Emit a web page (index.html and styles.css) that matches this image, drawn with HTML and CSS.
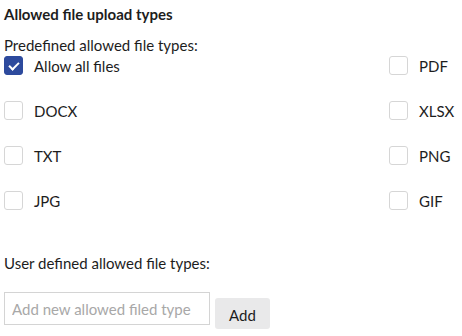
FILE: index.html
```html
<!DOCTYPE html>
<html lang="en">
<head>
    <meta charset="UTF-8">
    <title>Allowed file upload types</title>
    <link rel="stylesheet" href="styles.css">
</head>
<body>

    <div class="upload-settings">

        <!-- Predefined types -->
        <h3 class="section-title">Allowed file upload types</h3>
        <p class="field-label">Predefined allowed file types:</p>

        <div class="type-grid">
            <label class="type-option">
                <input type="checkbox" checked>
                <span class="box"></span>
                <span class="type-name">Allow all files</span>
            </label>
            <label class="type-option">
                <input type="checkbox">
                <span class="box"></span>
                <span class="type-name">PDF</span>
            </label>
            <label class="type-option">
                <input type="checkbox">
                <span class="box"></span>
                <span class="type-name">DOCX</span>
            </label>
            <label class="type-option">
                <input type="checkbox">
                <span class="box"></span>
                <span class="type-name">XLSX</span>
            </label>
            <label class="type-option">
                <input type="checkbox">
                <span class="box"></span>
                <span class="type-name">TXT</span>
            </label>
            <label class="type-option">
                <input type="checkbox">
                <span class="box"></span>
                <span class="type-name">PNG</span>
            </label>
            <label class="type-option">
                <input type="checkbox">
                <span class="box"></span>
                <span class="type-name">JPG</span>
            </label>
            <label class="type-option">
                <input type="checkbox">
                <span class="box"></span>
                <span class="type-name">GIF</span>
            </label>
        </div>

        <!-- User defined types -->
        <p class="field-label user-label">User defined allowed file types:</p>
        <div class="add-row">
            <input type="text" class="type-input" placeholder="Add new allowed filed type">
            <button class="add-button">Add</button>
        </div>

    </div>

</body>
</html>
```

FILE: styles.css
```css
/* Reset */
* {
    box-sizing: border-box;
    margin: 0;
    padding: 0;
}

body {
    font-family: 'Lato', 'Liberation Sans', sans-serif;
    background-color: #ffffff;
    color: #1d1d1d;
}

.upload-settings {
    padding: 4px 0 0 4px;
    width: 462px;
}

/* Headings */
.section-title {
    font-size: 15px;
    font-weight: bold;
    line-height: 18px;
    padding-top: 1px;
    margin-bottom: 12px;
}

.field-label {
    font-size: 15px;
    line-height: 20px;
}

/* Checkbox grid */
.type-grid {
    display: grid;
    grid-template-columns: 385px 1fr;
    grid-auto-rows: 45px;
    margin-top: 1px;
}

.type-option {
    display: flex;
    align-items: flex-start;
    gap: 11px;
    font-size: 15px;
    line-height: 20px;
    cursor: pointer;
}

.type-option input {
    display: none;
}

.type-option .box {
    width: 19px;
    height: 19px;
    border: 1px solid #d6d6d6;
    border-radius: 3px;
    background-color: #fff;
    position: relative;
}

.type-option input:checked + .box {
    background-color: #2d4a9d;
    border-color: #2d4a9d;
}

.type-option input:checked + .box::after {
    content: "";
    position: absolute;
    left: 6px;
    top: 3px;
    width: 4px;
    height: 8px;
    border: solid #fff;
    border-width: 0 2px 2px 0;
    transform: rotate(45deg);
}

/* User defined */
.user-label {
    margin-top: 17px;
}

.add-row {
    display: flex;
    align-items: flex-start;
    gap: 5px;
    margin-top: 19px;
}

.type-input {
    width: 206px;
    height: 33px;
    border: 1px solid #d4d4d4;
    padding: 0 7px;
    font-family: inherit;
    font-size: 15px;
    color: #1d1d1d;
}

.type-input::placeholder {
    color: #a8a8a8;
}

.add-button {
    margin-top: 6px;
    width: 55px;
    height: 31px;
    border: none;
    border-radius: 3px;
    background-color: #e9e9ea;
    font-family: inherit;
    font-size: 15px;
    color: #1d1d1d;
    padding-top: 3px;
}
```
